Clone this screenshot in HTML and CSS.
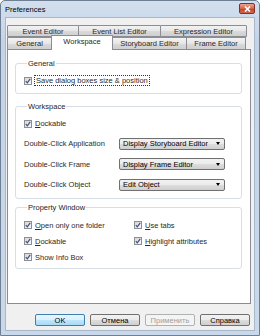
FILE: index.html
```html
<!DOCTYPE html>
<html lang="en">
<head>
  <meta charset="UTF-8" />
  <title>Preferences</title>
  <link rel="stylesheet" href="styles.css">
</head>
<body>
  <div class="window">
    <!-- Title bar -->
    <div class="titlebar">
      <span class="title">Preferences</span>
      <span class="close-btn">
        <svg width="7" height="6" viewBox="0 0 7 6"><path d="M1 0.5 L6 5.5 M6 0.5 L1 5.5" stroke="#fff" stroke-width="1.6"/></svg>
      </span>
    </div>

    <div class="client">
      <!-- Tabs -->
      <div class="tab-row">
        <div class="tab" style="flex-basis:72px">Event Editor</div>
        <div class="tab" style="flex-basis:83px">Event List Editor</div>
        <div class="tab" style="flex-basis:87px">Expression Editor</div>
      </div>
      <div class="tab-row">
        <div class="tab" style="flex-basis:45px">General</div>
        <div class="tab active" style="flex-basis:62px">Workspace</div>
        <div class="tab" style="flex-basis:75px">Storyboard Editor</div>
        <div class="tab" style="flex-basis:60px">Frame Editor</div>
      </div>

      <!-- Workspace page -->
      <div class="panel">
        <fieldset class="group">
          <legend>General</legend>
          <label class="check">
            <span class="box"><svg width="6" height="6" viewBox="0 0 6 6"><path d="M0.8 3.2 L2.3 4.8 L5.2 0.9" fill="none" stroke="#3b4f8a" stroke-width="1.2"/></svg></span>
            <span class="focus">Save dialog boxes size &amp; position</span>
          </label>
        </fieldset>

        <fieldset class="group ws">
          <legend>Workspace</legend>
          <label class="check">
            <span class="box"><svg width="6" height="6" viewBox="0 0 6 6"><path d="M0.8 3.2 L2.3 4.8 L5.2 0.9" fill="none" stroke="#3b4f8a" stroke-width="1.2"/></svg></span>
            <span><u>D</u>ockable</span>
          </label>
          <div class="field">
            <span class="field-label">Double-Click Application</span>
            <div class="select">Display Storyboard Editor<span class="arrow"></span></div>
          </div>
          <div class="field">
            <span class="field-label">Double-Click Frame</span>
            <div class="select">Display Frame Editor<span class="arrow"></span></div>
          </div>
          <div class="field">
            <span class="field-label">Double-Click Object</span>
            <div class="select">Edit Object<span class="arrow"></span></div>
          </div>
        </fieldset>

        <fieldset class="group props">
          <legend>Property Window</legend>
          <div class="check-grid">
            <label class="check">
              <span class="box"><svg width="6" height="6" viewBox="0 0 6 6"><path d="M0.8 3.2 L2.3 4.8 L5.2 0.9" fill="none" stroke="#3b4f8a" stroke-width="1.2"/></svg></span>
              <span><u>O</u>pen only one folder</span>
            </label>
            <label class="check">
              <span class="box"><svg width="6" height="6" viewBox="0 0 6 6"><path d="M0.8 3.2 L2.3 4.8 L5.2 0.9" fill="none" stroke="#3b4f8a" stroke-width="1.2"/></svg></span>
              <span><u>U</u>se tabs</span>
            </label>
            <label class="check">
              <span class="box"><svg width="6" height="6" viewBox="0 0 6 6"><path d="M0.8 3.2 L2.3 4.8 L5.2 0.9" fill="none" stroke="#3b4f8a" stroke-width="1.2"/></svg></span>
              <span><u>D</u>ockable</span>
            </label>
            <label class="check">
              <span class="box"><svg width="6" height="6" viewBox="0 0 6 6"><path d="M0.8 3.2 L2.3 4.8 L5.2 0.9" fill="none" stroke="#3b4f8a" stroke-width="1.2"/></svg></span>
              <span><u>H</u>ighlight attributes</span>
            </label>
            <label class="check">
              <span class="box"><svg width="6" height="6" viewBox="0 0 6 6"><path d="M0.8 3.2 L2.3 4.8 L5.2 0.9" fill="none" stroke="#3b4f8a" stroke-width="1.2"/></svg></span>
              <span>Show Info Box</span>
            </label>
          </div>
        </fieldset>
      </div>

      <!-- Dialog buttons -->
      <div class="buttons">
        <button class="btn default">OK</button>
        <button class="btn">Отмена</button>
        <button class="btn" disabled>Применить</button>
        <button class="btn">Справка</button>
      </div>
    </div>
  </div>
</body>
</html>
```

FILE: styles.css
```css
* { box-sizing: border-box; }
body {
  margin: 0;
  font-family: 'Liberation Sans', Arial, sans-serif;
  font-size: 7.5px;
  color: #2a2a2a;
}
.window {
  width: 260px;
  height: 336px;
  display: flex;
  flex-direction: column;
  background: linear-gradient(to bottom, #d3dfee, #c4d4e8 40px, #c9d8eb);
  border: 1px solid #6e7f93;
  border-radius: 5px 5px 0 0;
}
.titlebar {
  height: 16px;
  display: flex;
  align-items: center;
  justify-content: space-between;
  padding: 0 4px 0 4px;
}
.title { font-size: 7.5px; color: #000; }
.close-btn {
  width: 16px;
  height: 11px;
  margin-top: -1px;
  display: flex;
  align-items: center;
  justify-content: center;
  border: 1px solid #7a3328;
  border-radius: 2px;
  background: linear-gradient(to bottom, #e9a593, #d4654c 50%, #c3432a 55%, #d06a4f);
}
.client {
  flex: 1;
  margin: 0 4px 4px 4px;
  background: #f0f0f0;
  border: 1px solid #a9b8c9;
  padding: 7px 3px 0 1px;
  display: flex;
  flex-direction: column;
}
.tab-row {
  display: flex;
  height: 12px;
  padding-left: 1px;
  padding-right: 2px;
}
.tab {
  flex-grow: 0;
  flex-shrink: 0;
  border: 1px solid #8a8d94;
  border-bottom: none;
  margin-left: -1px;
  background: linear-gradient(to bottom, #f3f3f3, #e6e6e6 50%, #dadada 51%, #cfcfcf);
  display: flex;
  align-items: center;
  justify-content: center;
  white-space: nowrap;
  border-radius: 1px 1px 0 0;
}
.tab-row:first-child .tab { border-bottom: 1px solid #8a8d94; }
.tab.active {
  background: #fff;
  margin-top: -2px;
  height: 15px;
  padding-bottom: 3px;
  position: relative;
  z-index: 1;
}
.panel {
  height: 255px;
  background: #fff;
  border: 1px solid #898c95;
  padding: 0 8px 0 7px;
}
.group {
  margin: 0;
  border: 1px solid #d5dfe5;
  border-radius: 3px;
  padding: 8px 6px 8px 8px;
}
.group:first-child { margin-top: 9px; }
.group legend {
  padding: 0 1px;
  margin-left: 3px;
  line-height: 9px;
  color: #1e1e1e;
}
.ws { margin-top: 8px; padding-bottom: 7px; }
.props { margin-top: 4px; padding-top: 9px; padding-bottom: 6px; }
.check {
  display: flex;
  align-items: center;
  height: 9px;
  gap: 3px;
  white-space: nowrap;
}
.box {
  width: 8px;
  height: 8px;
  border: 1px solid #8e8f8f;
  background: linear-gradient(135deg, #d6d6d6, #f8f8f8);
  display: flex;
  align-items: center;
  justify-content: center;
}
.focus { outline: 1px dotted #333; outline-offset: 0; padding: 0 1px; }
.field {
  display: flex;
  align-items: center;
  height: 12px;
  margin-top: 8.5px;
}
.ws .check + .field { margin-top: 9.5px; }
.field-label { width: 95px; flex-shrink: 0; }
.select {
  width: 106px;
  height: 12px;
  border: 1px solid #707070;
  border-radius: 2px;
  background: linear-gradient(to bottom, #f2f2f2, #ebebeb 50%, #dddddd 51%, #cfcfcf);
  display: flex;
  align-items: center;
  justify-content: space-between;
  padding: 0 4px 0 3px;
  color: #000;
}
.arrow {
  width: 0;
  height: 0;
  border-left: 2.5px solid transparent;
  border-right: 2.5px solid transparent;
  border-top: 3px solid #000;
}
.check-grid {
  display: grid;
  grid-template-columns: 110px auto;
  row-gap: 7px;
}
.buttons {
  display: flex;
  justify-content: flex-end;
  gap: 5px;
  margin-top: 10px;
  padding-right: 1px;
}
.btn {
  width: 50px;
  height: 12px;
  padding: 0;
  font-family: 'Liberation Sans', Arial, sans-serif;
  font-size: 7.5px;
  color: #000;
  border: 1px solid #707070;
  border-radius: 2px;
  background: linear-gradient(to bottom, #f2f2f2, #ebebeb 50%, #dddddd 51%, #cfcfcf);
}
.btn.default {
  border-color: #3c7fb1;
  background: linear-gradient(to bottom, #eaf6fd, #d9f0fc 50%, #bee6fd 51%, #a7d9f5);
}
.btn:disabled {
  color: #a0a0a0;
  border-color: #adb2b5;
  background: #f4f4f4;
}
```
